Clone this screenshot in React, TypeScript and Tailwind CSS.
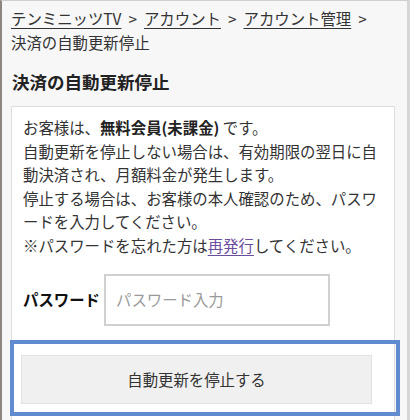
import React from "react";

export default function App() {
  const font = { fontFamily: '"Noto Sans CJK JP", "Noto Sans", sans-serif' };
  return (
    <div
      style={font}
      className="relative w-[410px] h-[420px] overflow-hidden bg-[#f7f7f7] text-[#333] text-[15.4px] border-l-2 border-l-[#8d857f] border-t border-t-[#cfcfcf] border-r-[3px] border-r-[#d6d6d6]"
    >
      <nav className="pl-[9px] pt-[5px] leading-[24px] whitespace-nowrap">
        <div className="flex items-center">
          <a className="underline underline-offset-[3px]">テンミニッツTV</a>
          <span className="px-[7px]">&gt;</span>
          <a className="underline underline-offset-[3px]">アカウント</a>
          <span className="px-[7px]">&gt;</span>
          <a className="underline underline-offset-[3px]">アカウント管理</a>
          <span className="px-[7px]">&gt;</span>
        </div>
        <div>決済の自動更新停止</div>
      </nav>
      <h1 className="pl-[10px] mt-[16px] text-[17.5px] font-bold leading-[24px] text-[#222]">
        決済の自動更新停止
      </h1>
      <div className="ml-[9px] mt-[12px] w-[384px] h-[320px] bg-white border border-[#dedede] pl-[11px] pt-[9px]">
        <p className="leading-[23.5px] whitespace-nowrap">
          お客様は、<b className="text-[#222]">無料会員(未課金)</b> です。
          <br />
          自動更新を停止しない場合は、有効期限の翌日に自
          <br />
          動決済され、月額料金が発生します。
          <br />
          停止する場合は、お客様の本人確認のため、パスワ
          <br />
          ードを入力してください。
          <br />
          ※パスワードを忘れた方は
          <a className="text-[#6b4d9e] underline underline-offset-[3px]">再発行</a>
          してください。
        </p>
        <div className="mt-[17px] flex items-center">
          <span className="font-bold text-[#111] w-[81px] whitespace-nowrap">パスワード</span>
          <div className="w-[226px] h-[52px] border-2 border-[#d0d0d0] flex items-center pl-[10px] text-[#9a9a9a]">
            パスワード入力
          </div>
        </div>
        <div className="-ml-[2px] mt-[29px] w-[351px] h-[49px] bg-[#f0f0f0] border border-[#e2e2e2] flex items-center justify-center text-[#333]">
          自動更新を停止する
        </div>
      </div>
      <div className="absolute left-[8px] top-[339px] w-[390px] h-[76px] border-4 border-[#608bd0]" />
    </div>
  );
}
